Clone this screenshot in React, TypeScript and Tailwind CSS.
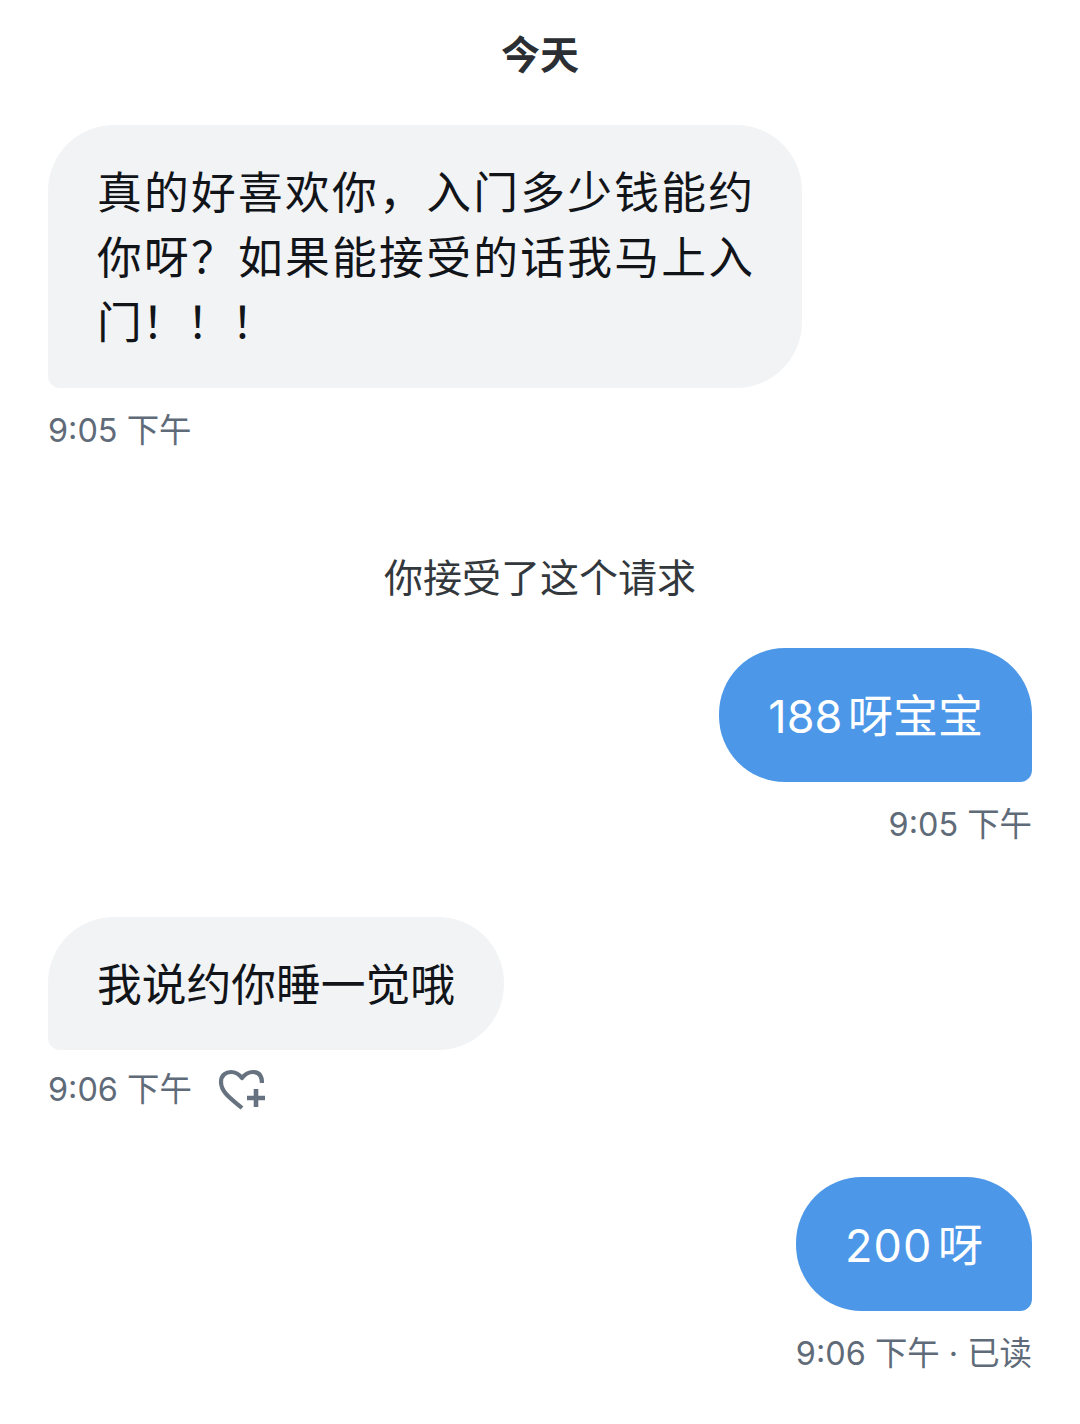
import { type ReactNode } from 'react';

const font = { fontFamily: '"Inter", "Noto Sans CJK SC", sans-serif' };

function Incoming({ children, wide }: { children: ReactNode; wide?: boolean }) {
  return (
    <div className={`${wide ? 'w-[754px] text-justify' : 'w-fit'} rounded-[66px] rounded-bl-[12px] bg-[#f1f3f5] pb-[32px] pl-[49px] pr-[49px] pt-[36px] text-[44.75px] leading-[65px] text-[#111418]`}>
      {children}
    </div>
  );
}

function Outgoing({ children }: { children: ReactNode }) {
  return (
    <div className="ml-auto w-fit rounded-[66px] rounded-br-[12px] bg-[#4c97e8] px-[49px] pb-[33px] pt-[37px] text-[45px] leading-[64px] text-white [word-spacing:-7px]">
      {children}
    </div>
  );
}

function Time({ children, right }: { children: ReactNode; right?: boolean }) {
  return (
    <div className={`text-[32.4px] leading-[40px] text-[#5f6b78] ${right ? 'text-right' : ''}`}>{children}</div>
  );
}

function HeartPlus() {
  return (
    <svg width="48" height="42" viewBox="0 0 48 42" fill="none" stroke="#66727f" strokeLinejoin="round">
      <path strokeWidth="4.2" d="M24 39 C15 31 3 24 3 13 C3 6 8 3 13 3 C18 3 21 5 24 9 C27 5 31 3 35 3 C41 3 44 7 44 14" />
      <path strokeWidth="4.6" d="M38 20 V38 M29 29 H47" />
    </svg>
  );
}

export default function App() {
  return (
    <div style={font} className="h-[1424px] w-[1080px] overflow-hidden bg-white px-[48px] pt-[30px]">
      <div className="text-center text-[39px] font-bold leading-[50px] text-[#2b2f33]">今天</div>

      <div className="mt-[45px]">
        <Incoming wide>
          真的好喜欢你，入门多少钱能约你呀？如果能接受的话我马上入门！！！
        </Incoming>
      </div>
      <div className="mt-[23px]">
        <Time>9:05 下午</Time>
      </div>

      <div className="mt-[102px] text-center text-[39px] leading-[50px] text-[#33383d]">你接受了这个请求</div>

      <div className="mt-[45px]">
        <Outgoing>188 呀宝宝</Outgoing>
      </div>
      <div className="mt-[23px]">
        <Time right>9:05 下午</Time>
      </div>

      <div className="mt-[72px]">
        <Incoming>我说约你睡一觉哦</Incoming>
      </div>
      <div className="mt-[19px] flex items-center gap-[26px]">
        <Time>9:06 下午</Time>
        <HeartPlus />
      </div>

      <div className="mt-[66px]">
        <Outgoing><span className="tracking-[1px]">200</span> 呀</Outgoing>
      </div>
      <div className="mt-[23px]">
        <Time right>9:06 下午 · 已读</Time>
      </div>
    </div>
  );
}
